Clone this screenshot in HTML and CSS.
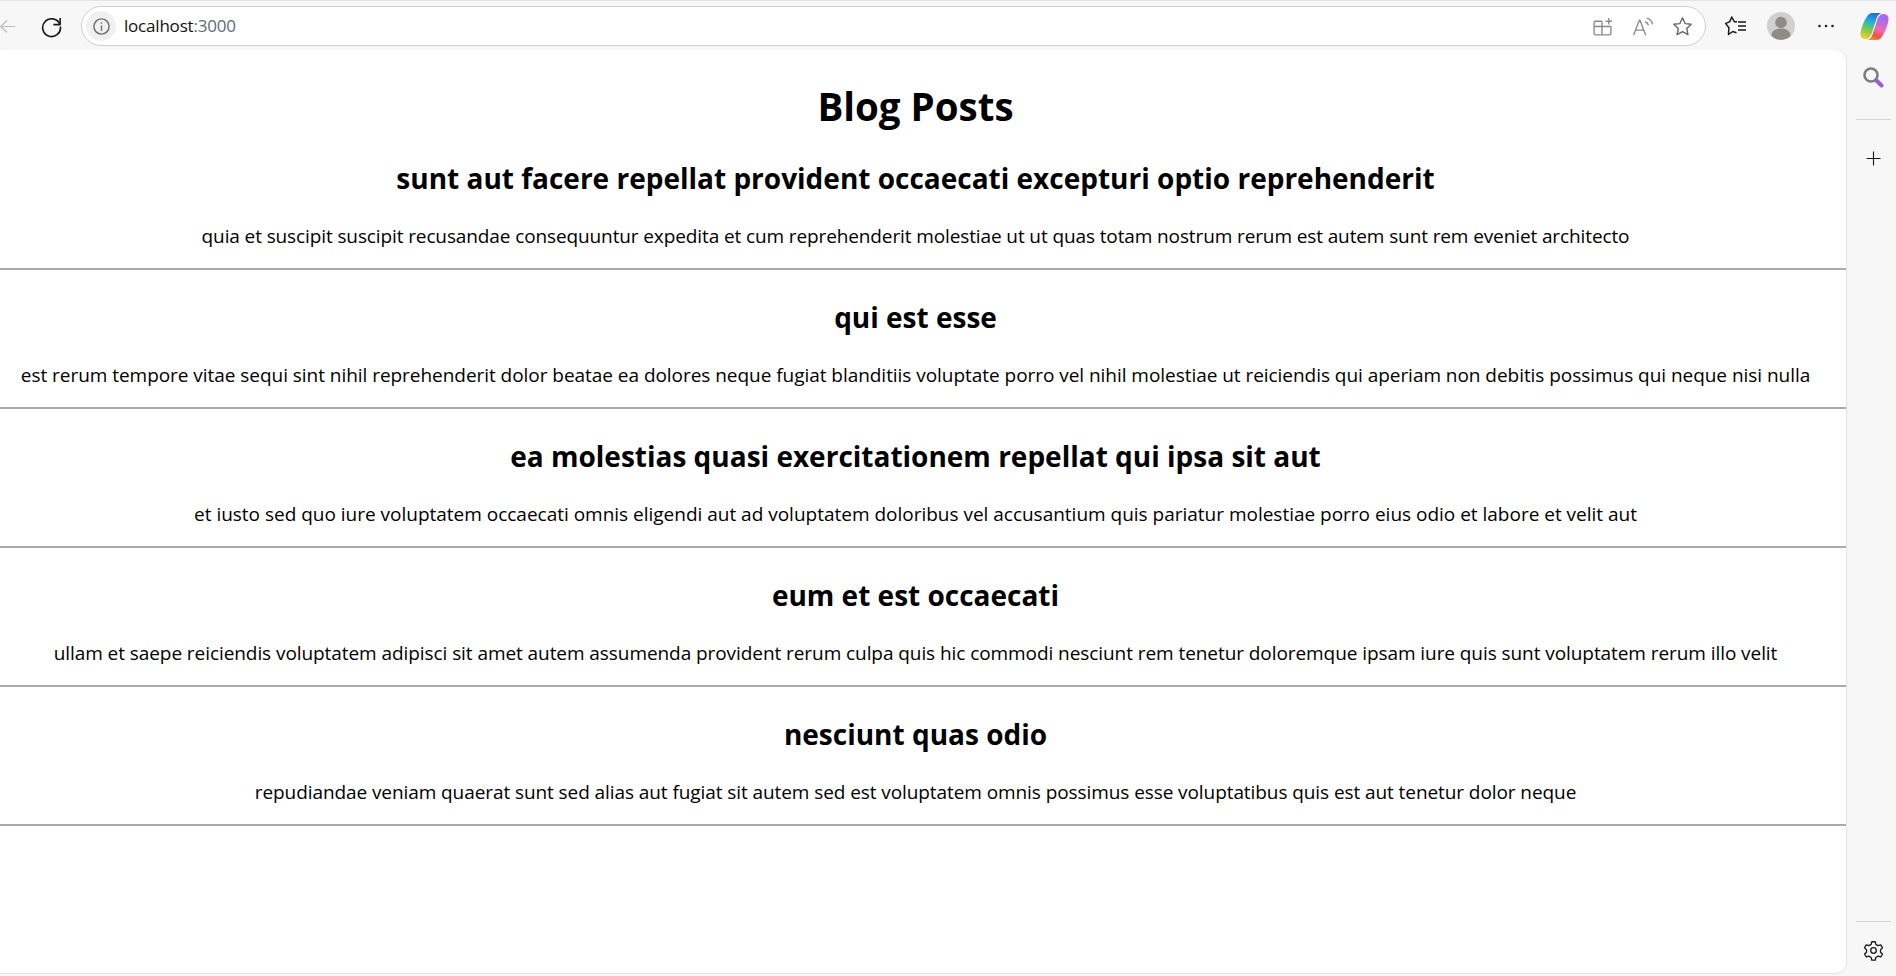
FILE: index.html
```html
<!DOCTYPE html>
<html lang="en">
<head>
<meta charset="utf-8">
<title>Blog Posts</title>
<link rel="stylesheet" href="styles.css">
</head>
<body>
<div class="browser">
  <header class="toolbar">
    <svg class="ico back" viewBox="0 0 20 20"><path d="M19 10H2M9.500 3 2 10l7.500 7"/></svg>
    <svg class="ico reload" viewBox="0 0 24 24"><path d="M20.600 9.500A9.300 9.300 0 1 0 21.300 12"/><path d="M21 3v7h-7"/></svg>
    <div class="omnibox">
      <span class="site-info">
        <svg viewBox="0 0 20 20"><circle cx="10" cy="10" r="8"/><path d="M10 9v5.500M10 5.600v1.400"/></svg>
      </span>
      <span class="url">localhost<span class="port">:3000</span></span>
      <span class="omni-actions">
        <svg class="ico tool" viewBox="0 0 20 20"><path d="M9.500 5H3.500A1.500 1.500 0 0 0 2 6.500v10A1.500 1.500 0 0 0 3.500 18h13a1.500 1.500 0 0 0 1.500-1.500V10H2M9.500 5v13M13 5h6M16 2v6"/></svg>
        <svg class="ico tool" viewBox="0 0 20 20"><path d="M1.500 18 7 4h.6L13 18M3.300 13.500h8M12.500 5.500c1.600.5 2.800 1.800 3.200 3.400M14 2c3 .8 5 3 5.600 6"/></svg>
        <svg class="ico tool" viewBox="0 0 20 20"><path d="m10 1.800 2.500 5.400 5.800.7-4.300 4 1.200 5.800-5.200-2.900-5.200 2.900 1.200-5.800-4.300-4 5.800-.7z"/></svg>
      </span>
    </div>
    <div class="chrome-actions">
      <svg class="ico fav" viewBox="0 0 22 20"><path d="M12 5.700H9.300L6.800 1 4.600 5.900.6 7.400l3.300 4.300-.4 6.800 4.300-3 3.700 1.200M13 6h8M13 10h8M13 14h8"/></svg>
      <svg class="avatar" viewBox="0 0 28 28"><circle cx="14" cy="14" r="14" fill="#d2d0ce"/><circle cx="14" cy="10.500" r="5.800" fill="#8f8b87"/><path d="M4.500 24c0-5 4-7.500 9.500-7.500s9.500 2.500 9.500 7.500a14 14 0 0 1-19 0z" fill="#8f8b87"/></svg>
      <svg class="dots" viewBox="0 0 18 4"><circle cx="2.500" cy="2" r="1.300"/><circle cx="9" cy="2" r="1.300"/><circle cx="15.500" cy="2" r="1.300"/></svg>
      <svg class="copilot" viewBox="0 0 29 27">
        <defs>
          <linearGradient id="cpL" gradientUnits="userSpaceOnUse" x1="14" y1="0" x2="6" y2="26"><stop offset="0" stop-color="#1c6fe0"/><stop offset=".35" stop-color="#25b3d6"/><stop offset=".62" stop-color="#6fca52"/><stop offset="1" stop-color="#f8cf2a"/></linearGradient>
          <linearGradient id="cpR" gradientUnits="userSpaceOnUse" x1="22" y1="6" x2="14" y2="27"><stop offset="0" stop-color="#a76bf0"/><stop offset=".5" stop-color="#f06bb0"/><stop offset=".8" stop-color="#f4503c"/><stop offset="1" stop-color="#f58a2a"/></linearGradient>
        </defs>
        <path d="M12 0h9.500C19 1 17.500 2.500 16.500 5.500L12 19.500C10.800 23.500 8.800 26 5.500 26 2 26 0 23.800.5 20 1.600 13 4.500 7 7 3.500 8.500 1.200 10 0 12 0z" fill="url(#cpL)"/>
        <path d="M17 27H7.500C10 26 11.500 24.500 12.500 21.500L17 7.500C18.200 3.500 20.200 1 23.500 1 27 1 29 3.200 28.500 7 27.400 14 24.500 20 22 23.500 20.500 25.800 19 27 17 27z" fill="url(#cpR)"/>
      </svg>
    </div>
  </header>
  <div class="viewport">
    <main class="page">
      <div class="content">
        <h1>Blog Posts</h1>
        <article class="post">
          <h2>sunt aut facere repellat provident occaecati excepturi optio reprehenderit</h2>
          <p>quia et suscipit suscipit recusandae consequuntur expedita et cum reprehenderit molestiae ut ut quas totam nostrum rerum est autem sunt rem eveniet architecto</p>
        </article>
        <article class="post">
          <h2>qui est esse</h2>
          <p>est rerum tempore vitae sequi sint nihil reprehenderit dolor beatae ea dolores neque fugiat blanditiis voluptate porro vel nihil molestiae ut reiciendis qui aperiam non debitis possimus qui neque nisi nulla</p>
        </article>
        <article class="post">
          <h2>ea molestias quasi exercitationem repellat qui ipsa sit aut</h2>
          <p>et iusto sed quo iure voluptatem occaecati omnis eligendi aut ad voluptatem doloribus vel accusantium quis pariatur molestiae porro eius odio et labore et velit aut</p>
        </article>
        <article class="post">
          <h2>eum et est occaecati</h2>
          <p>ullam et saepe reiciendis voluptatem adipisci sit amet autem assumenda provident rerum culpa quis hic commodi nesciunt rem tenetur doloremque ipsam iure quis sunt voluptatem rerum illo velit</p>
        </article>
        <article class="post">
          <h2>nesciunt quas odio</h2>
          <p>repudiandae veniam quaerat sunt sed alias aut fugiat sit autem sed est voluptatem omnis possimus esse voluptatibus quis est aut tenetur dolor neque</p>
        </article>
      </div>
    </main>
    <aside class="sidebar">
      <svg class="side-search" viewBox="0 0 22 22"><circle cx="9" cy="9" r="6.500" fill="none" stroke="#7d7d7d" stroke-width="2.600"/><path d="m14.500 14.500 5 5" stroke="#9a5fd0" stroke-width="4" stroke-linecap="round"/></svg>
      <div class="side-rule"></div>
      <svg class="ico side-plus" viewBox="0 0 16 16"><path d="M8 .5v15M.5 8h15"/></svg>
      <div class="side-spacer"></div>
      <div class="side-rule"></div>
      <svg class="ico side-gear" viewBox="0 0 24 24"><circle cx="12" cy="12" r="3.200"/><path d="M10 2h4l.7 3 2.600 1.500 3-.9 2 3.400-2.300 2.100v2.800l2.300 2.100-2 3.400-3-.9-2.600 1.500-.7 3h-4l-.7-3-2.600-1.500-3 .9-2-3.400 2.300-2.100v-2.800L1.700 9l2-3.400 3 .9L9.300 5z"/></svg>
    </aside>
  </div>
</div>
</body>
</html>
```
FILE: styles.css
```css
* { box-sizing: border-box; }
html, body { margin: 0; height: 100%; overflow: hidden; }
body { background: #f7f7f7; font-family: "Open Sans", "Noto Sans", sans-serif; color: #000; }
.browser { display: flex; flex-direction: column; height: 976px; border-top: 1px solid #e4e4e4; }

.ico { fill: none; stroke: #1a1a1a; stroke-width: 1.400; stroke-linejoin: round; flex: none; }

.toolbar { display: flex; align-items: center; height: 49px; flex: none; padding-top: 1px; }
.back { width: 17px; height: 17px; margin-left: -1px; stroke: #bdbdbd; }
.reload { width: 23px; height: 23px; margin-left: 24px; stroke-width: 1.700; }
.omnibox { display: flex; align-items: center; width: 1625px; height: 40px; margin-left: 18px; padding: 0 12px 0 4px; background: #fff; border: 1.500px solid #cfcfcf; border-radius: 20px; }
.site-info { display: flex; align-items: center; justify-content: center; width: 30px; height: 30px; background: #f0f0f0; border-radius: 50%; }
.site-info svg { width: 19px; height: 19px; fill: none; stroke: #6e6e6e; stroke-width: 1.500; }
.url { margin-left: 8px; padding-bottom: 2px; font-size: 17px; letter-spacing: -.2px; color: #111; }
.port { color: #5f6b76; }
.omni-actions { display: flex; align-items: center; gap: 19px; margin-left: auto; }
.tool { width: 21px; height: 21px; stroke: #8a8a8a; stroke-width: 1.300; }
.omni-actions .tool:last-child { stroke: #666; }

.chrome-actions { display: flex; align-items: center; flex: none; margin-left: 19px; }
.fav { width: 22px; height: 20px; stroke-width: 1.500; }
.avatar { width: 28px; height: 28px; margin-left: 20px; }
.dots { width: 18px; height: 4px; margin-left: 22px; fill: #222; }
.copilot { width: 29px; height: 27px; margin-left: 25px; }

.viewport { display: flex; flex: 1; min-height: 0; padding-bottom: 3px; }
.page { flex: 1; min-width: 0; background: #fff; border-radius: 0 10px 10px 0; box-shadow: 1px 0 1px #e3e3e3, 0 1px 1px #e3e3e3; overflow: hidden; }
.content { margin-left: -15px; text-align: center; }

h1 { margin: 0; padding-top: 30px; font-size: 38.500px; line-height: 52px; font-weight: 700; }
.post { border-bottom: 2px solid #ababab; height: 139px; padding-top: 28.500px; }
.post:first-of-type { height: 137.500px; padding-top: 27px; }
.post h2 { margin: 0; font-size: 28px; line-height: 38px; font-weight: 700; }
.post p { margin: 26px 0 0; font-size: 19px; line-height: 26px; letter-spacing: -.08px; white-space: nowrap; }
.post:nth-of-type(1) p { letter-spacing: -.113px; }
.post:nth-of-type(2) p { letter-spacing: -.042px; }
.post:nth-of-type(3) p { letter-spacing: -.01px; }
.post:nth-of-type(4) p { letter-spacing: -.07px; }

.sidebar { display: flex; flex-direction: column; align-items: center; flex: none; width: 50px; padding: 16px 0 12px 4px; }
.side-search { width: 22px; height: 22px; flex: none; }
.side-rule { width: 35px; height: 1px; background: #d4d4d4; flex: none; }
.side-search + .side-rule { margin-top: 31px; }
.side-plus { width: 15px; height: 15px; margin-top: 31px; stroke-width: 1.200; }
.side-spacer { flex: 1; }
.side-gear { width: 21px; height: 21px; margin-top: 18px; stroke-width: 1.500; }
```
